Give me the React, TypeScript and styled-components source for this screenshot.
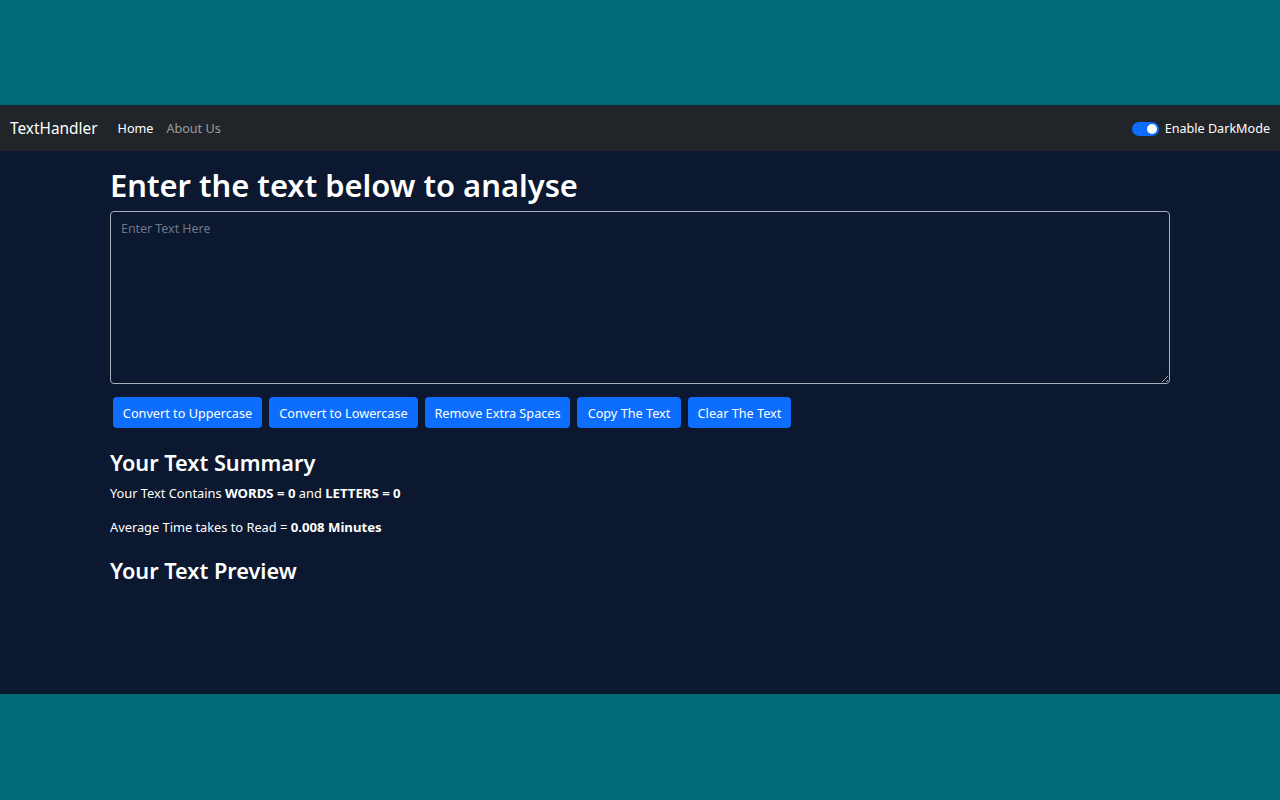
import React from 'react';
import styled, { createGlobalStyle } from 'styled-components';

const FONT = `"Noto Sans", "Open Sans", sans-serif`;

const GlobalStyle = createGlobalStyle`
  html, body { margin: 0; padding: 0; background: #006a77; }
  body { font-family: ${FONT}; color: #fff; }
  * { box-sizing: border-box; }
`;

const Shell = styled.div`
  margin-top: 105px;
  height: 589px;
  display: flex;
  flex-direction: column;
`;

const NavBar = styled.nav`
  flex: none;
  height: 46px;
  background: #212529;
  display: flex;
  align-items: center;
  padding: 2px 10px 0;
`;

const Brand = styled.a`
  font-size: 15.4px;
  line-height: 24px;
  color: #fff;
  margin-right: 20px;
  text-decoration: none;
`;

const NavLinks = styled.div`
  display: flex;
  gap: 13px;
`;

const NavLink = styled.a<{ $active?: boolean }>`
  font-size: 12.6px;
  line-height: 20px;
  text-decoration: none;
  color: ${(p) => (p.$active ? '#fff' : 'rgba(255,255,255,0.55)')};
`;

const ModeToggle = styled.label`
  margin-left: auto;
  display: flex;
  align-items: center;
  gap: 6px;
  font-size: 12.6px;
  line-height: 20px;
  color: #fff;
`;

const Switch = styled.span`
  width: 27px;
  height: 14px;
  border-radius: 7px;
  background: #0d6efd;
  display: flex;
  align-items: center;
  justify-content: flex-end;
  padding: 0 2px;
`;

const Knob = styled.span`
  width: 10px;
  height: 10px;
  border-radius: 50%;
  background: #fff;
`;

const Main = styled.main`
  flex: 1;
  background: #0b1830;
`;

const Container = styled.div`
  width: 1060px;
  margin: 0 auto;
  padding-top: 14px;
`;

const Title = styled.h1`
  margin: 0 0 6px;
  font-size: 30.9px;
  line-height: 40px;
  font-weight: 600;
`;

const TextBox = styled.textarea`
  display: block;
  width: 100%;
  height: 173px;
  margin: 0;
  padding: 7px 10px;
  border: 1px solid #a9b0ba;
  border-radius: 4px;
  background: #0b1830;
  color: #fff;
  font-family: ${FONT};
  font-size: 12.4px;
  line-height: 20px;
  outline: none;
  &::placeholder { color: #6f7782; }
`;

const ButtonRow = styled.div`
  display: flex;
  gap: 7px;
  margin-top: 13px;
  padding-left: 3px;
`;

const ActionButton = styled.button<{ $w: number }>`
  width: ${(p) => p.$w}px;
  height: 31px;
  padding: 0;
  border: none;
  border-radius: 4px;
  background: #0d6efd;
  color: #fff;
  font-family: ${FONT};
  font-size: 12.7px;
  line-height: 20px;
  cursor: pointer;
`;

const SectionTitle = styled.h4<{ $top: number }>`
  margin: ${(p) => p.$top}px 0 0;
  font-size: 21.7px;
  line-height: 27px;
  font-weight: 600;
`;

const Para = styled.p<{ $top: number }>`
  margin: ${(p) => p.$top}px 0 0;
  font-size: 12.8px;
  line-height: 20px;
  b { font-weight: 700; font-size: 13.2px; }
`;

const buttons: [string, number][] = [
  ['Convert to Uppercase', 149],
  ['Convert to Lowercase', 149],
  ['Remove Extra Spaces', 145],
  ['Copy The Text', 104],
  ['Clear The Text', 103],
];

export default function App() {
  return (
    <>
      <GlobalStyle />
      <Shell>
        <NavBar>
          <Brand href="#">TextHandler</Brand>
          <NavLinks>
            <NavLink href="#" $active>Home</NavLink>
            <NavLink href="#">About Us</NavLink>
          </NavLinks>
          <ModeToggle>
            <Switch><Knob /></Switch>
            Enable DarkMode
          </ModeToggle>
        </NavBar>
        <Main>
          <Container>
            <Title>Enter the text below to analyse</Title>
            <TextBox placeholder="Enter Text Here" />
            <ButtonRow>
              {buttons.map(([label, w]) => (
                <ActionButton key={label} $w={w}>{label}</ActionButton>
              ))}
            </ButtonRow>
            <SectionTitle $top={21}>Your Text Summary</SectionTitle>
            <Para $top={7}>
              Your Text Contains <b>WORDS = 0</b> and <b>LETTERS = 0</b>
            </Para>
            <Para $top={14}>
              Average Time takes to Read = <b>0.008 Minutes</b>
            </Para>
            <SectionTitle $top={20}>Your Text Preview</SectionTitle>
          </Container>
        </Main>
      </Shell>
    </>
  );
}
